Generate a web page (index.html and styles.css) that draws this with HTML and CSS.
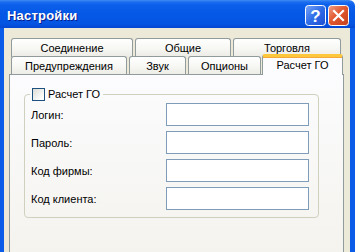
FILE: index.html
```html
<!DOCTYPE html>
<html lang="ru">
<head>
    <meta charset="UTF-8">
    <title>Настройки</title>
    <link rel="stylesheet" href="styles.css">
</head>
<body>
    <div class="window">
        <header class="titlebar">
            <div class="title">Настройки</div>
            <div class="title-buttons">
                <svg class="tb-btn" width="21" height="21" viewBox="0 0 21 21">
                    <defs>
                        <linearGradient id="helpBg" x1="0" y1="0" x2="1" y2="1">
                            <stop offset="0" stop-color="#7AA4F6"/>
                            <stop offset="0.5" stop-color="#2F6CE8"/>
                            <stop offset="1" stop-color="#1C4FD0"/>
                        </linearGradient>
                    </defs>
                    <rect x="0.5" y="0.5" width="20" height="20" rx="3" fill="url(#helpBg)" stroke="#fff"/>
                    <text x="10.5" y="17" text-anchor="middle" class="help-glyph">?</text>
                </svg>
                <svg class="tb-btn" width="21" height="21" viewBox="0 0 21 21">
                    <defs>
                        <linearGradient id="closeBg" x1="0" y1="0" x2="1" y2="1">
                            <stop offset="0" stop-color="#F0A088"/>
                            <stop offset="0.45" stop-color="#E2582F"/>
                            <stop offset="1" stop-color="#C4401C"/>
                        </linearGradient>
                    </defs>
                    <rect x="0.5" y="0.5" width="20" height="20" rx="3" fill="url(#closeBg)" stroke="#fff"/>
                    <path d="M6 6 L15 15 M15 6 L6 15" stroke="#fff" stroke-width="2.2" stroke-linecap="square"/>
                </svg>
            </div>
        </header>

        <div class="frame">
            <div class="tab-row tab-row-back">
                <div class="tab">Соединение</div>
                <div class="tab">Общие</div>
                <div class="tab">Торговля</div>
            </div>
            <div class="tab-row tab-row-front">
                <div class="tab">Предупреждения</div>
                <div class="tab">Звук</div>
                <div class="tab">Опционы</div>
                <div class="tab tab-active">Расчет ГО</div>
            </div>

            <div class="panel">
                <fieldset class="group">
                    <legend class="group-legend">
                        <span class="checkbox"></span>
                        <span>Расчет ГО</span>
                    </legend>
                    <div class="form-grid">
                        <label class="form-label">Логин:</label>
                        <div class="text-input"></div>
                        <label class="form-label">Пароль:</label>
                        <div class="text-input"></div>
                        <label class="form-label">Код фирмы:</label>
                        <div class="text-input"></div>
                        <label class="form-label">Код клиента:</label>
                        <div class="text-input"></div>
                    </div>
                </fieldset>
            </div>
        </div>
    </div>
</body>
</html>
```

FILE: styles.css
```css
:root {
    --xp-blue: #0A5BE8;
    --xp-face: #ECE9D8;
    --tab-border: #919B9C;
    --input-border: #7F9DB9;
}

* {
    margin: 0;
    padding: 0;
    box-sizing: border-box;
}

body {
    background: #fff;
    font-family: "Liberation Sans", Arial, sans-serif;
    font-size: 11px;
    color: #000;
    overflow: hidden;
}

.window {
    width: 355px;
    height: 252px;
    display: flex;
    flex-direction: column;
}

/* title bar */
.titlebar {
    height: 28px;
    display: flex;
    align-items: center;
    justify-content: space-between;
    padding: 2px 6px 0 7px;
    border-top-right-radius: 6px;
    background: linear-gradient(#3F8CF3 0, #1C6DF0 2px, #0A5FEA 5px, #0558E6 50%, #0554E2 85%, #0447D2 100%);
}

.title {
    color: #fff;
    font-weight: bold;
    font-size: 13px;
    text-shadow: 1px 1px 0 #0A1E8C;
    letter-spacing: 0.2px;
}

.title-buttons {
    display: flex;
    gap: 2px;
}

.tb-btn {
    display: block;
}

.help-glyph {
    fill: #fff;
    font-family: "Liberation Sans", Arial, sans-serif;
    font-weight: bold;
    font-size: 17px;
}

/* dialog body */
.frame {
    flex: 1;
    display: flex;
    flex-direction: column;
    background: var(--xp-face);
    border-left: 4px solid var(--xp-blue);
    border-right: 5px solid var(--xp-blue);
    padding: 10px 6px 0 5px;
}

.tab-row {
    display: flex;
    gap: 2px;
    padding-left: 2px;
    height: 18px;
    align-items: flex-start;
}

.tab {
    height: 19px;
    border: 1px solid var(--tab-border);
    border-bottom: none;
    border-radius: 3px 3px 0 0;
    background: linear-gradient(#FFFFFF, #F7F7F4 50%, #ECEBE5);
    text-align: center;
    line-height: 16px;
    padding-top: 1px;
}

.tab-row-back .tab:nth-child(1) { width: 122px; }
.tab-row-back .tab:nth-child(2) { width: 96px; }
.tab-row-back .tab:nth-child(3) { width: 108px; }

.tab-row-front .tab:nth-child(1) { width: 116px; }
.tab-row-front .tab:nth-child(2) { width: 57px; }
.tab-row-front .tab:nth-child(3) { width: 73px; }

.tab-active {
    position: relative;
    z-index: 1;
    width: 81px;
    height: 21px;
    margin-top: -2px;
    margin-left: -1px;
    background: #FCFCFE;
    border-top: 3px solid #FFC83C;
    box-shadow: inset 0 1px 0 #F4A83A;
    padding-top: 0;
}

.panel {
    flex: 1;
    border: 1px solid var(--tab-border);
    border-bottom: none;
    background: linear-gradient(#FCFCFE, #F4F3EE);
    padding: 12px 24px 0 14px;
}

/* group box */
.group {
    border: 1px solid #D0D0BF;
    border-radius: 4px;
    padding: 2px 8px 7px 6px;
}

.group-legend {
    display: flex;
    align-items: center;
    gap: 3px;
    padding: 0 3px 0 2px;
    margin-left: -1px;
    height: 14px;
}

.checkbox {
    width: 13px;
    height: 13px;
    border: 1px solid #1C5180;
    background: linear-gradient(135deg, #DCDCD7, #FFFFFF 85%);
}

.form-grid {
    display: grid;
    grid-template-columns: 135px 143px;
    grid-auto-rows: 23px;
    row-gap: 5px;
    align-items: center;
}

.text-input {
    height: 23px;
    border: 1px solid var(--input-border);
    background: #fff;
}
```
